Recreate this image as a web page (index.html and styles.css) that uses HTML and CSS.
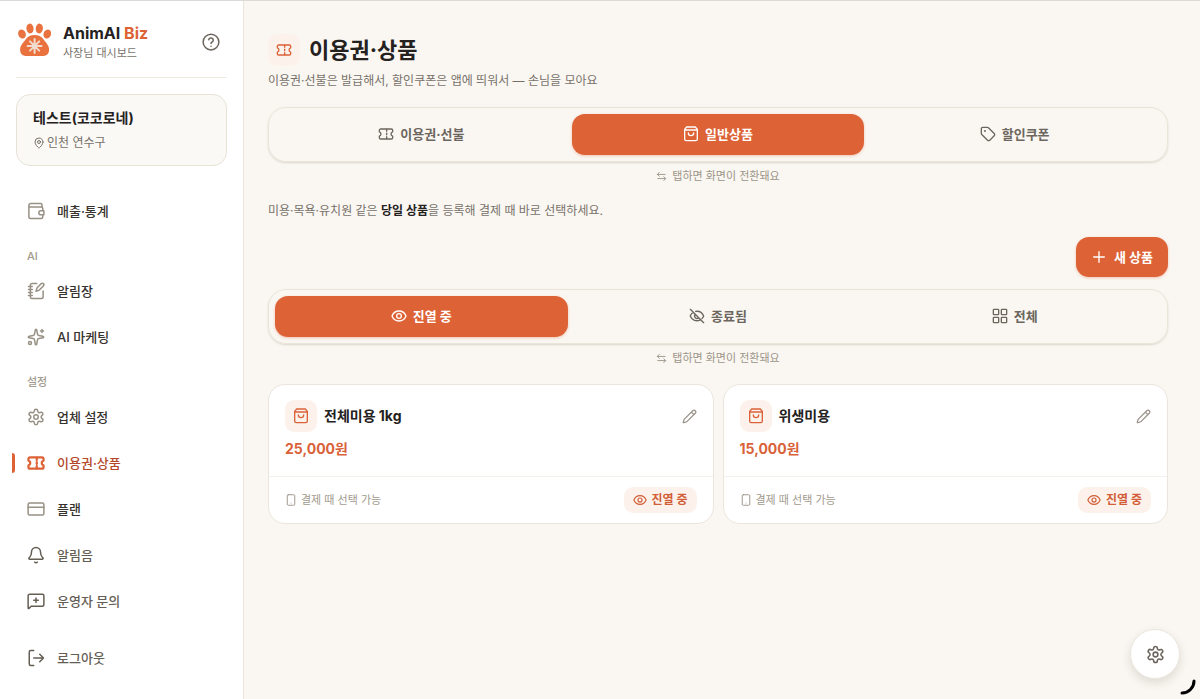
FILE: index.html
```html
<!DOCTYPE html>
<html lang="ko">
<head>
<meta charset="utf-8">
<meta name="viewport" content="width=device-width, initial-scale=1">
<title>AnimAI Biz</title>
<link rel="stylesheet" href="styles.css">
</head>
<body>
<svg class="sprite" aria-hidden="true">
  <symbol id="ticket" viewBox="0 0 24 24"><path d="M4 4.500h16a2 2 0 0 1 2 2v2.300c-1.500.4-2.400 1.700-2.400 3.200s.9 2.800 2.400 3.200v2.300a2 2 0 0 1-2 2H4a2 2 0 0 1-2-2v-2.300c1.500-.4 2.400-1.700 2.400-3.200S3.500 9.200 2 8.800V6.500a2 2 0 0 1 2-2z"/><path d="M13 5v3M13 10.800v2.400M13 16v3"/></symbol>
  <symbol id="bag" viewBox="0 0 24 24"><path d="M5.500 1.500h13L21.500 5v14.500a2.500 2.500 0 0 1-2.500 2.500H5a2.500 2.500 0 0 1-2.500-2.500V5z"/><path d="M3 6h18M8 10.500a4 4 0 0 0 8 0"/></symbol>
  <symbol id="tag" viewBox="0 0 24 24"><path d="M12.600 2.600A2 2 0 0 0 11.200 2H4a2 2 0 0 0-2 2v7.200a2 2 0 0 0 .6 1.400l8.700 8.700a2.400 2.400 0 0 0 3.400 0l6.600-6.600a2.400 2.400 0 0 0 0-3.400z"/><circle cx="7.500" cy="7.500" r=".6"/></symbol>
  <symbol id="swap" viewBox="0 0 24 24"><path d="M7 3 3 7.500l4 4M3 7.500h17M17 12.500l4 4-4 4.500M21 16.500H4"/></symbol>
  <symbol id="eye" viewBox="0 0 24 24"><path d="M1.500 12C3.500 7 7.500 4.500 12 4.500S20.500 7 22.500 12c-2 5-6 7.500-10.500 7.500S3.500 17 1.500 12z"/><circle cx="12" cy="12" r="3.500"/></symbol>
  <symbol id="eye-off" viewBox="0 0 24 24"><path d="M10 5c5.500-.7 10 2.200 12 7-.6 1.500-1.500 2.800-2.600 3.900M6.500 6.300C4.300 7.600 2.700 9.500 1.800 12c2.600 6.500 9.300 9 15.200 5.700M14.500 14.500a3.500 3.500 0 0 1-5-5M2 2l20 20"/></symbol>
  <symbol id="grid" viewBox="0 0 24 24"><rect x="2" y="2" width="8" height="8" rx="1"/><rect x="14" y="2" width="8" height="8" rx="1"/><rect x="2" y="14" width="8" height="8" rx="1"/><rect x="14" y="14" width="8" height="8" rx="1"/></symbol>
  <symbol id="plus" viewBox="0 0 24 24"><path d="M12 4v16M4 12h16"/></symbol>
  <symbol id="pencil" viewBox="0 0 24 24"><path d="M21.200 6.800a2.800 2.800 0 0 0-4-4L3.800 16.200a2 2 0 0 0-.5.8L2 21.400a.5.5 0 0 0 .6.6L7 20.700a2 2 0 0 0 .8-.5zM15 5l4 4"/></symbol>
  <symbol id="phone" viewBox="0 0 24 24"><rect x="4.500" y="1.500" width="15" height="21" rx="2"/><path d="M12 18h.01"/></symbol>
  <symbol id="gear" viewBox="0 0 24 24"><path d="M9.700 4.100a2.300 2.300 0 0 1 4.600 0 2.300 2.300 0 0 0 3.400 1.900 2.300 2.300 0 0 1 2.300 4 2.300 2.300 0 0 0 0 4 2.300 2.300 0 0 1-2.300 4 2.300 2.300 0 0 0-3.400 1.900 2.300 2.300 0 0 1-4.600 0A2.300 2.300 0 0 0 6.300 18 2.300 2.300 0 0 1 4 14a2.300 2.300 0 0 0 0-4 2.300 2.300 0 0 1 2.300-4 2.300 2.300 0 0 0 3.400-1.900"/><circle cx="12" cy="12" r="3"/></symbol>
  <symbol id="wallet" viewBox="0 0 24 24"><path d="M21 11V8.500a2 2 0 0 0-2-2H3.500M20 6.500V4a2 2 0 0 0-2-2H5a2.500 2.500 0 0 0-2.500 2.500V20A2 2 0 0 0 4.500 22H19a2 2 0 0 0 2-2v-2.500M22.500 11.500v5.500h-4a2.750 2.750 0 0 1 0-5.500z"/></symbol>
  <symbol id="note" viewBox="0 0 24 24"><path d="M13 2H6.500a2 2 0 0 0-2 2v16a2 2 0 0 0 2 2h13a2 2 0 0 0 2-2v-8M2 6h5M2 10h5M2 14h5M2 18h5M21.800 5.200a2 2 0 0 0-3-3L13.500 7.800 12 12.300l4.500-1.500z"/></symbol>
  <symbol id="sparkle" viewBox="0 0 24 24"><path d="M11 2.800a1 1 0 0 1 2 0l1 5.500a2 2 0 0 0 1.700 1.700l5.500 1a1 1 0 0 1 0 2l-5.500 1a2 2 0 0 0-1.700 1.700l-1 5.500a1 1 0 0 1-2 0l-1-5.500A2 2 0 0 0 8.300 14l-5.500-1a1 1 0 0 1 0-2l5.500-1A2 2 0 0 0 10 8.300zM20 2v4M22 4h-4"/><circle cx="4" cy="20" r="2"/></symbol>
  <symbol id="card" viewBox="0 0 24 24"><rect x="1.500" y="4" width="21" height="16" rx="2"/><path d="M1.500 9.500h21"/></symbol>
  <symbol id="bell" viewBox="0 0 24 24"><path d="M10.300 21.500a2 2 0 0 0 3.400 0M3.300 15.300A1 1 0 0 0 4 17.500h16a1 1 0 0 0 .7-2.200C19.400 14 18 12.500 18 8A6 6 0 0 0 6 8c0 4.500-1.400 6-2.700 7.300"/></symbol>
  <symbol id="chat" viewBox="0 0 24 24"><path d="M20.500 3h-17a2 2 0 0 0-2 2v16.300c0 .7.700 1 1.200.5L5.500 19h15a2 2 0 0 0 2-2V5a2 2 0 0 0-2-2zM12 8v6M9 11h6"/></symbol>
  <symbol id="logout" viewBox="0 0 24 24"><path d="M9 2H5a2 2 0 0 0-2 2v16a2 2 0 0 0 2 2h4M17 7l5 5-5 5M22 12H9"/></symbol>
  <symbol id="pin" viewBox="0 0 24 24"><path d="M20 10c0 5-5.500 10.200-7.400 11.800a1 1 0 0 1-1.200 0C9.500 20.200 4 15 4 10a8 8 0 0 1 16 0z"/><circle cx="12" cy="10" r="3"/></symbol>
  <symbol id="help" viewBox="0 0 24 24"><circle cx="12" cy="12" r="10.500"/><path d="M9 9a3 3 0 0 1 5.900 1c0 2-2.900 2.400-2.900 4M12 17.500h.01"/></symbol>
</svg>
<div class="app">
  <aside class="sidebar">
    <header class="brand">
      <svg class="logo" viewBox="0 0 34 34" aria-hidden="true">
        <g fill="#e9723f"><ellipse cx="5" cy="12" rx="3.700" ry="4.700" transform="rotate(-22 5 12)"/><ellipse cx="13" cy="6.500" rx="3.600" ry="4.900" transform="rotate(-6 13 6.500)"/><ellipse cx="22.300" cy="6.500" rx="3.600" ry="4.900" transform="rotate(6 22.300 6.500)"/><ellipse cx="30.300" cy="12" rx="3.700" ry="4.700" transform="rotate(22 30.300 12)"/><path d="M17.600 13c4.500 0 7 1.500 9 4.500 2 3 5.500 5.500 5.500 10s-2.600 6.500-6.500 6.500h-16c-3.900 0-6.500-2-6.500-6.500s3.500-7 5.500-10 4.500-4.500 9-4.500z"/></g>
        <path d="M17.600 17v14M10.600 24h14M13 19.400l9.200 9.200M22.200 19.400 13 28.600" stroke="#f1ddd0" stroke-width="2" stroke-linecap="round"/>
      </svg>
      <div class="brand-copy"><strong class="brand-name">AnimAI <span class="accent">Biz</span></strong><span class="brand-sub">사장님 대시보드</span></div>
      <button class="help" type="button" aria-label="도움말"><svg class="icon"><use href="#help"/></svg></button>
    </header>
    <section class="shop">
      <strong class="shop-name">테스트(코코로네)</strong>
      <span class="shop-place"><svg class="icon"><use href="#pin"/></svg>인천 연수구</span>
    </section>
    <nav class="menu">
      <a class="item" href="#sales"><svg class="icon"><use href="#wallet"/></svg>매출·통계</a>
      <h2 class="group">AI</h2>
      <a class="item" href="#notes"><svg class="icon"><use href="#note"/></svg>알림장</a>
      <a class="item" href="#marketing"><svg class="icon"><use href="#sparkle"/></svg>AI 마케팅</a>
      <h2 class="group">설정</h2>
      <a class="item" href="#shop"><svg class="icon"><use href="#gear"/></svg>업체 설정</a>
      <a class="item current" href="#tickets" aria-current="page"><svg class="icon"><use href="#ticket"/></svg>이용권·상품</a>
      <a class="item" href="#plan"><svg class="icon"><use href="#card"/></svg>플랜</a>
      <button class="item quiet" type="button"><svg class="icon"><use href="#bell"/></svg>알림음</button>
      <button class="item quiet" type="button"><svg class="icon"><use href="#chat"/></svg>운영자 문의</button>
      <button class="item quiet logout" type="button"><svg class="icon"><use href="#logout"/></svg>로그아웃</button>
    </nav>
  </aside>
  <main class="main">
    <div class="heading"><span class="tile"><svg class="icon"><use href="#ticket"/></svg></span><h1 class="title">이용권·상품</h1></div>
    <p class="text">이용권·선불은 발급해서, 할인쿠폰은 앱에 띄워서 — 손님을 모아요</p>
    <div class="tabs">
      <button class="tab" type="button"><svg class="icon"><use href="#ticket"/></svg>이용권·선불</button>
      <button class="tab on" type="button"><svg class="icon"><use href="#bag"/></svg>일반상품</button>
      <button class="tab" type="button"><svg class="icon"><use href="#tag"/></svg>할인쿠폰</button>
    </div>
    <p class="hint"><svg class="icon"><use href="#swap"/></svg>탭하면 화면이 전환돼요</p>
    <p class="text about">미용·목욕·유치원 같은 <strong>당일 상품</strong>을 등록해 결제 때 바로 선택하세요.</p>
    <button class="add" type="button"><svg class="icon"><use href="#plus"/></svg>새 상품</button>
    <div class="tabs">
      <button class="tab on" type="button"><svg class="icon"><use href="#eye"/></svg>진열 중</button>
      <button class="tab" type="button"><svg class="icon"><use href="#eye-off"/></svg>종료됨</button>
      <button class="tab" type="button"><svg class="icon"><use href="#grid"/></svg>전체</button>
    </div>
    <p class="hint"><svg class="icon"><use href="#swap"/></svg>탭하면 화면이 전환돼요</p>
    <div class="products">
      <article class="product">
        <div class="product-body">
          <div class="product-head"><span class="tile"><svg class="icon"><use href="#bag"/></svg></span><h3 class="product-name">전체미용 1kg</h3><button class="edit" type="button" aria-label="수정"><svg class="icon"><use href="#pencil"/></svg></button></div>
          <p class="price">25,000원</p>
        </div>
        <footer class="product-foot"><span class="usable"><svg class="icon"><use href="#phone"/></svg>결제 때 선택 가능</span><button class="status" type="button"><svg class="icon"><use href="#eye"/></svg>진열 중</button></footer>
      </article>
      <article class="product">
        <div class="product-body">
          <div class="product-head"><span class="tile"><svg class="icon"><use href="#bag"/></svg></span><h3 class="product-name">위생미용</h3><button class="edit" type="button" aria-label="수정"><svg class="icon"><use href="#pencil"/></svg></button></div>
          <p class="price">15,000원</p>
        </div>
        <footer class="product-foot"><span class="usable"><svg class="icon"><use href="#phone"/></svg>결제 때 선택 가능</span><button class="status" type="button"><svg class="icon"><use href="#eye"/></svg>진열 중</button></footer>
      </article>
    </div>
  </main>
</div>
<button class="fab" type="button" aria-label="설정"><svg class="icon"><use href="#gear"/></svg></button>
<svg class="corner" viewBox="0 0 16 16" aria-hidden="true"><path d="M14 2A12 12 0 0 1 2 14"/></svg>
</body>
</html>
```
FILE: styles.css
```css
* { box-sizing: border-box; margin: 0; padding: 0; }

body {
  font-family: Inter, "Noto Sans CJK KR", sans-serif;
  font-size: 13px;
  line-height: 20px;
  color: #24211e;
  background: #faf7f2;
}

button { font: inherit; color: inherit; border: 0; background: none; cursor: pointer; }
a { color: inherit; text-decoration: none; }

.sprite { display: none; }
.icon {
  width: 16px;
  height: 16px;
  flex: none;
  fill: none;
  stroke: currentColor;
  stroke-width: 2;
  stroke-linecap: round;
  stroke-linejoin: round;
}

.app { display: flex; min-height: 100vh; border-top: 1px solid #dcdad7; }

.sidebar {
  width: 244px;
  flex: none;
  padding: 16px;
  background: #fff;
  border-right: 1px solid #e9e5db;
}
.brand {
  display: flex;
  align-items: center;
  gap: 12px;
  padding: 5px 7px 15px 1px;
  border-bottom: 1px solid #f0ebe1;
}
.logo { width: 34px; height: 34px; flex: none; align-self: flex-start; }
.brand-copy { display: flex; flex-direction: column; flex: 1; }
.brand-name { font-size: 16px; font-weight: 700; line-height: 22px; white-space: nowrap; }
.accent { color: #dd6236; }
.brand-sub { font-size: 11px; line-height: 18px; color: #77716a; }
.help { display: flex; color: #6c665e; }
.help .icon { width: 18px; height: 18px; }

.shop {
  display: flex;
  flex-direction: column;
  gap: 4px;
  margin-top: 16px;
  padding: 12px 16px;
  border: 1px solid #e8e3d7;
  border-radius: 14px;
  background: #faf9f5;
}
.shop-name { font-size: 14px; line-height: 22px; }
.shop-place { display: flex; align-items: center; gap: 2px; font-size: 12px; color: #77716a; }
.shop-place .icon { width: 12px; height: 12px; }

.menu { display: flex; flex-direction: column; gap: 2px; margin-top: 23px; }
.item {
  display: flex;
  align-items: center;
  gap: 12px;
  position: relative;
  height: 44px;
  padding: 0 11px;
  font-weight: 500;
  color: #37322d;
  text-align: left;
}
.item .icon { width: 18px; height: 18px; color: #989185; }
.quiet, .item.quiet .icon { color: #655e55; }
.current { color: #b5482a; }
.item.current .icon { color: #dd6236; stroke-width: 3; }
.current::before {
  content: "";
  position: absolute;
  left: -4px;
  top: 12px;
  width: 3px;
  height: 20px;
  border-radius: 0 3px 3px 0;
  background: #dd6236;
}
.logout { margin-top: 11px; }
.group { height: 32px; padding: 12px 11px 0; font-size: 11px; line-height: 18px; font-weight: 500; color: #a19a8e; }

.main { flex: 1; min-width: 0; padding: 33px 32px 32px 24px; }
.heading { display: flex; align-items: center; gap: 9px; }
.tile {
  display: grid;
  place-items: center;
  width: 32px;
  height: 32px;
  flex: none;
  border-radius: 9px;
  background: #fdf2eb;
  color: #d96238;
}
.title { font-size: 22px; line-height: 32px; font-weight: 700; }
.text { margin-top: 5px; color: #77716a; font-size: 12px; }
.text strong { color: #24211e; }

.tabs {
  display: grid;
  grid-template-columns: repeat(3, 1fr);
  gap: 4px;
  margin-top: 16px;
  padding: 6px;
  border: 1px solid #ebe5d9;
  border-radius: 18px;
  box-shadow: 0 1px 2px rgba(80, 65, 40, 0.18);
}
.tab {
  display: flex;
  align-items: center;
  justify-content: center;
  gap: 6px;
  height: 41px;
  padding-bottom: 2px;
  border-radius: 13px;
  font-weight: 700;
  color: #6c665e;
}
.on { background: #dd6236; color: #fff; box-shadow: 0 1px 3px rgba(221, 98, 54, 0.35); }
.hint {
  display: flex;
  align-items: center;
  justify-content: center;
  gap: 5px;
  margin-top: 4px;
  font-size: 11px;
  color: #9b9488;
}
.hint .icon { width: 11px; height: 11px; }
.about { margin-top: 15px; }
.add {
  display: flex;
  align-items: center;
  gap: 7px;
  height: 40px;
  margin: 16px 0 -4px auto;
  padding: 0 15px;
  border-radius: 13px;
  background: #dd6236;
  color: #fff;
  font-weight: 700;
  box-shadow: 0 1px 3px rgba(221, 98, 54, 0.35);
}

.products { display: grid; grid-template-columns: repeat(2, 1fr); gap: 9px; margin-top: 16px; }
.product { border: 1px solid #ebe6dc; border-radius: 17px; background: #fff; }
.product-body { padding: 15px 16px 17px; }
.product-head { display: flex; align-items: center; gap: 7px; }
.product-name { flex: 1; font-size: 14px; font-weight: 700; }
.edit { display: flex; color: #99938a; }
.edit .icon { width: 15px; height: 15px; }
.price { margin-top: 7px; font-size: 14px; font-weight: 700; color: #d96238; }
.product-foot {
  display: flex;
  align-items: center;
  justify-content: space-between;
  padding: 10px 16px;
  border-top: 1px solid #f3f0eb;
}
.usable { display: flex; align-items: center; gap: 4px; font-size: 11px; color: #a19a8e; }
.usable .icon { width: 12px; height: 12px; }
.status {
  display: flex;
  align-items: center;
  gap: 5px;
  height: 26px;
  padding: 0 9px;
  border-radius: 9px;
  background: #fdf2eb;
  color: #d15e37;
  font-size: 12px;
  font-weight: 700;
}
.status .icon { width: 14px; height: 14px; }

.fab {
  display: grid;
  place-items: center;
  position: fixed;
  right: 20px;
  bottom: 20px;
  width: 50px;
  height: 50px;
  border: 1px solid #ebe6dc;
  border-radius: 50%;
  background: #fff;
  color: #6c665e;
  box-shadow: 0 4px 10px rgba(60, 50, 35, 0.14);
}
.fab .icon { width: 19px; height: 19px; }
.corner {
  position: fixed;
  right: 4px;
  bottom: 4px;
  width: 16px;
  height: 16px;
  fill: none;
  stroke: #000;
  stroke-width: 3;
  stroke-linecap: round;
}
```
